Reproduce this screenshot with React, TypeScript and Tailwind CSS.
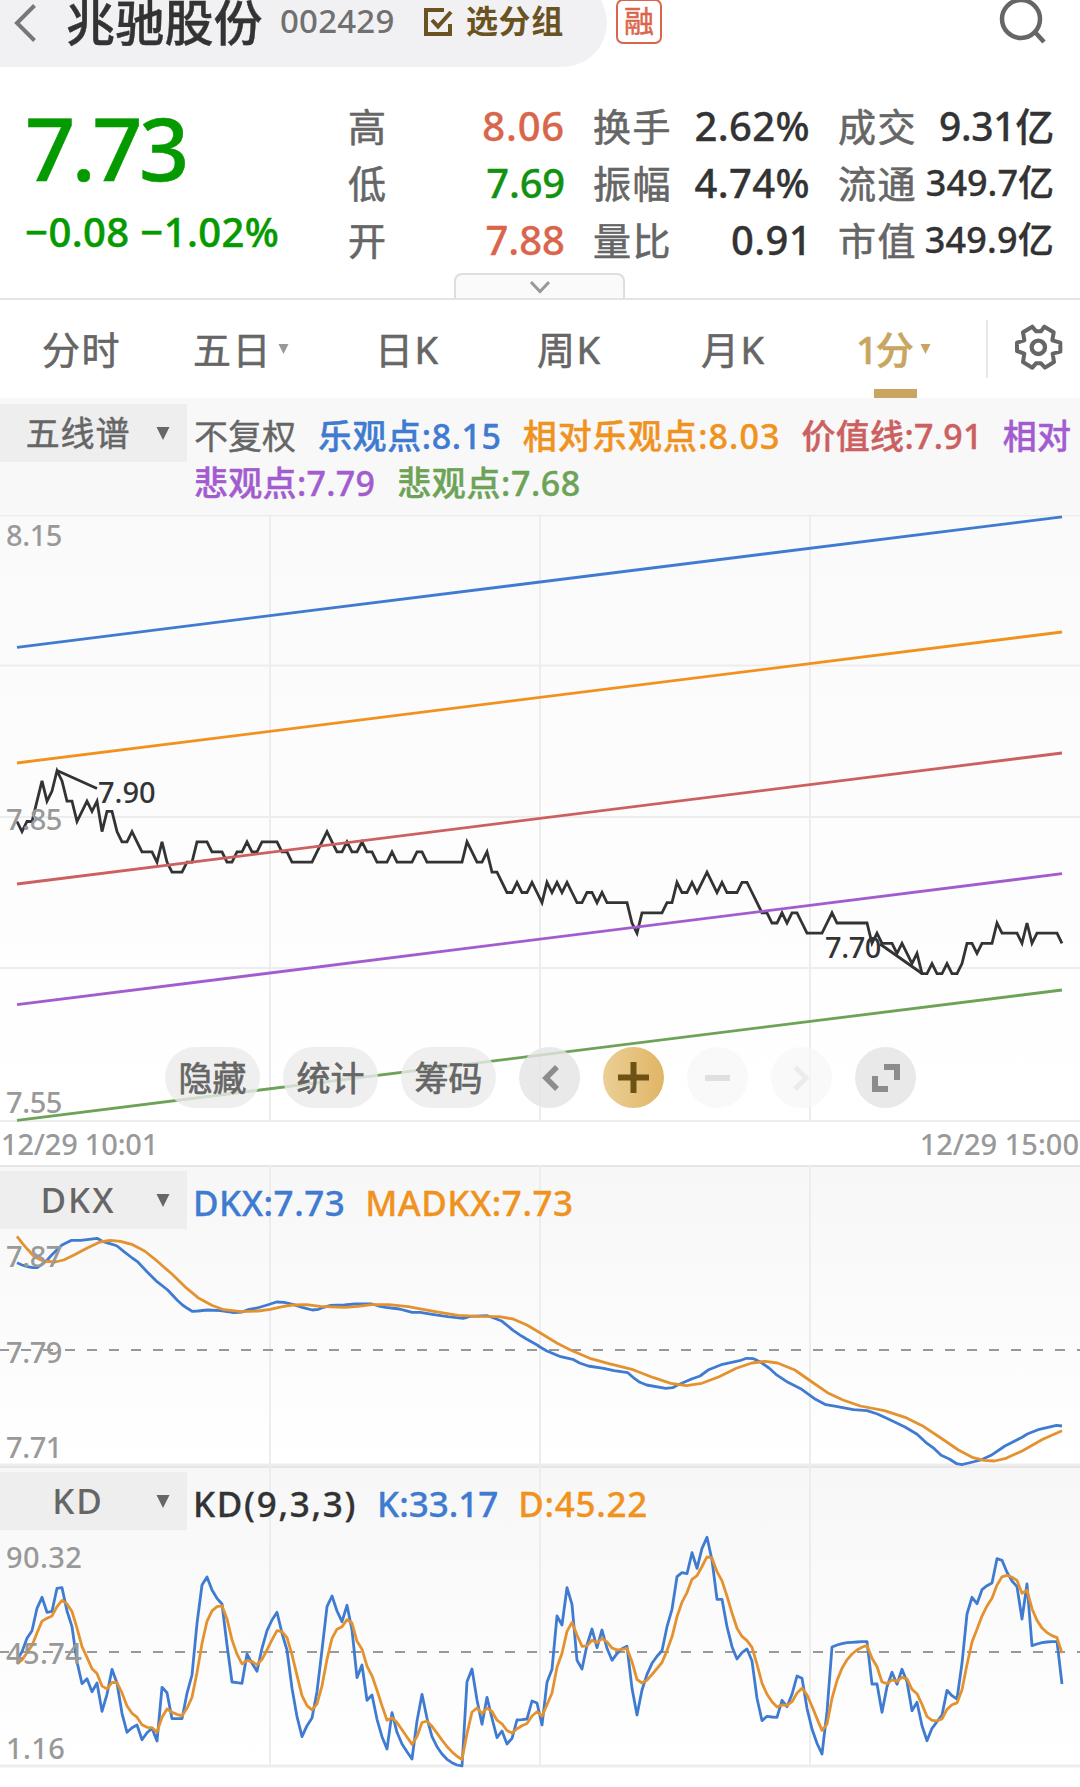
import React from "react";
import clsx from "clsx";

// 1-minute closes, in cents below the session high (7.90)
const TICKS = [
  5, 6, 5, 5, 3, 1, 3, 2, 0, 1, 3, 3, 5, 4, 3, 4, 3, 6, 4, 4, 6, 7, 7, 6, 7, 8, 8, 8, 9, 7,
  9, 10, 10, 10, 9, 9, 7, 7, 7, 8, 8, 8, 9, 9, 8, 8, 7, 8, 8, 7, 7, 7, 7, 8, 8, 9, 9, 9, 9, 9,
  8, 7, 6, 7, 8, 8, 7, 8, 8, 7, 8, 8, 9, 9, 9, 8, 9, 9, 9, 9, 8, 8, 9, 9, 9, 9, 9, 9, 9, 9,
  7, 8, 9, 9, 8, 10, 10, 11, 12, 12, 11, 12, 12, 11, 12, 13, 11, 12, 11, 12, 11, 12, 13, 13, 12, 12, 13, 12, 13, 13,
  13, 13, 13, 15, 16, 14, 14, 14, 14, 14, 13, 13, 11, 12, 12, 11, 12, 11, 10, 11, 12, 11, 12, 12, 12, 11, 11, 12, 13, 14,
  14, 15, 15, 14, 15, 14, 14, 15, 16, 16, 16, 16, 15, 14, 15, 15, 15, 15, 15, 15, 15, 17, 16, 17, 17, 17, 18, 17, 18, 19,
  18, 20, 20, 19, 20, 20, 19, 20, 20, 19, 17, 17, 18, 17, 17, 17, 15, 16, 16, 16, 16, 17, 15, 17, 16, 16, 16, 16, 16, 17,
];

// K line, distance from the top of the plot in thirds of a pixel
const K_LINE = [
  540, 515, 475, 452, 385, 352, 397, 394, 325, 323, 393, 440, 545, 611, 596, 635, 609, 694, 643, 568,
  610, 700, 757, 743, 735, 779, 758, 745, 783, 622, 638, 716, 716, 716, 640, 585, 430, 315, 291, 330,
  355, 372, 495, 606, 608, 610, 522, 550, 574, 505, 452, 420, 397, 460, 510, 625, 710, 770, 737, 714,
  635, 510, 380, 348, 393, 425, 376, 450, 593, 555, 661, 645, 718, 770, 807, 698, 757, 792, 815, 837,
  723, 643, 715, 770, 800, 822, 838, 848, 855, 858, 605, 567, 660, 733, 652, 715, 773, 753, 792, 775,
  720, 719, 717, 663, 669, 735, 607, 568, 408, 435, 323, 373, 541, 567, 495, 447, 503, 450, 505, 541,
  521, 506, 499, 625, 705, 630, 583, 550, 529, 512, 440, 388, 290, 278, 281, 218, 265, 205, 172, 240,
  358, 358, 440, 500, 537, 518, 507, 543, 655, 722, 709, 711, 712, 661, 680, 643, 588, 595, 685, 747,
  790, 822, 695, 501, 495, 491, 488, 487, 486, 485, 485, 612, 612, 697, 620, 577, 613, 568, 605, 692,
  667, 737, 782, 745, 725, 705, 631, 647, 657, 550, 402, 352, 371, 329, 317, 309, 236, 241, 277, 303,
  320, 417, 312, 497, 492, 488, 486, 485, 485, 612,
];

const DKX =
  "17,1262.7 22,1265 27.5,1266.7 32.7,1267.7 37.2,1267.7 42,1264.3 47.2,1260 51.7,1255 56.8,1250 62,1245 71.6,1240.3 80.9,1240.3 97.1,1238.3 102.3,1241.3 112.3,1244.3 117.1,1246 124,1251.7 132.2,1258 137.1,1261.3 147,1271.7 157,1281.7 167.7,1290 177.3,1300.3 182.5,1305 187.3,1308.3 192.1,1311.3 198,1311 207.3,1310 220.4,1310.7 234.2,1312.7 242.1,1312 247.9,1309.7 257.2,1308 267.2,1305 276.5,1302 284.1,1302.3 292.7,1304.3 303,1307.7 312.3,1310 318.5,1309.3 323.7,1307.3 330.6,1305.3 344.4,1305 354.7,1304 371.9,1304 378.8,1306 385.7,1307.3 399.4,1309 412.2,1312.3 420.1,1312.3 432.2,1314.3 447.7,1316.7 463.2,1318.3 470,1316.3 487.3,1315.7 495.9,1318.7 502.1,1321.3 513.1,1330.3 522,1336.3 526.9,1339.3 537.2,1345 540,1347 546.9,1351 560.7,1356.7 572.7,1359.3 579.6,1363 588.2,1366 603.7,1368.3 614,1370.7 627.8,1372.7 634.7,1378.7 639.9,1382.3 646.7,1385 665.7,1388.3 672.6,1387.7 677.7,1385 691.5,1379 700.1,1376 708.7,1369.7 722.5,1364.3 739.7,1360.7 746.6,1358.3 753.5,1358.7 760.4,1362 769,1368 775.9,1374.3 787.9,1382.3 801.7,1389.3 815.5,1399.3 825.8,1404.7 836.1,1406.3 853.4,1409.7 867.1,1410.7 877.5,1414 887.8,1418.7 905,1427 917.1,1434.3 925.7,1442.3 934.3,1448.7 941.2,1455.3 949.8,1459.3 956.7,1463.7 961.8,1464.7 968.7,1463 980.8,1460 991.1,1455.3 1004.9,1446 1022.1,1437.3 1027.3,1434 1039.3,1429.3 1056.5,1425.3 1062,1426";

const MADKX =
  "17,1236.3 22.4,1243.3 27.5,1249.3 34.4,1256.7 43,1261 55.1,1262 63.7,1260 74,1255 87.8,1247.7 99.9,1242 110.2,1240.3 120.5,1241.3 132.6,1244.7 144.6,1251 156.7,1260.7 172.2,1274.3 186,1287.7 198,1297.7 211.8,1305.3 223.8,1309.7 241,1311.7 258.3,1311 270.3,1309.3 282.4,1306.7 292.7,1305 306.5,1304.7 320.2,1306.3 344.4,1307.3 358.1,1306.3 371.9,1304.7 389.1,1304.7 408.1,1306.7 433.9,1311.3 458,1315.3 478.7,1316.3 499.3,1316.7 513.1,1319 526.9,1325 540,1332.7 557.2,1343.3 571,1350.3 589.9,1358.3 608.9,1363.7 633,1369.7 653.6,1377.7 670.9,1383.3 686.3,1385.7 701.8,1383.3 719.1,1376.7 736.3,1368.3 751.8,1363 765.6,1361.3 777.6,1363 794.8,1370 812,1382 827.5,1392.7 843,1400 860.3,1406 884.4,1410.7 905,1417.3 922.2,1425.7 939.4,1437 958.4,1450 972.2,1457.3 984.2,1460.3 994.5,1461 1004.9,1458.7 1022.1,1451 1042.8,1439.3 1062,1430.7";

const xAt = (i: number) => 17 + i * 5;

const pricePoints = TICKS.map((t, i) => `${xAt(i)},${(770.7 + t * 10.15).toFixed(1)}`).join(" ");
const kPoints = K_LINE.map((k, i) => `${xAt(i)},${(1480 + k / 3).toFixed(1)}`).join(" ");

// D is the 1/3 smoothing of K
let d = 552;
const dPoints = K_LINE.map((k, i) => {
  if (i > 0) d = (2 * d + k) / 3;
  return `${xAt(i)},${(1480 + d / 3).toFixed(1)}`;
}).join(" ");

const channel = [
  { color: "#3f7bd0", from: 647.3, to: 516.8 },
  { color: "#f0921e", from: 763, to: 632 },
  { color: "#cc6060", from: 884, to: 753 },
  { color: "#a35ccf", from: 1004.7, to: 873.7 },
  { color: "#6da357", from: 1120.3, to: 990 },
];

const GRID_X = [270, 540, 810];

function Header() {
  return (
    <header className="relative h-[67px] flex items-start">
      <div className="-mt-[22px] h-[89px] w-[607px] shrink-0 rounded-r-full bg-[#f1f1f4] flex items-center pl-[14px]">
        <svg className="w-6 h-[40px] shrink-0" viewBox="0 0 24 40" fill="none" stroke="#777" strokeWidth="4">
          <path d="M20.500 2.500 3 20l17.500 17.500" />
        </svg>
        <h1 className="ml-[28px] w-[197px] text-[49px] leading-none tracking-[0.2px] font-medium [-webkit-text-stroke:0.4px] text-[#333] whitespace-nowrap">
          兆驰股份
        </h1>
        <span className="ml-[17px] -mt-[4px] w-[115px] text-[33px] leading-none tracking-[0.2px] font-medium text-[#707070]">002429</span>
        <svg className="ml-[28px] -mt-[2px] w-[30px] h-[30px]" viewBox="0 0 30 30" fill="none" stroke="#6b5321" strokeWidth="4">
          <path d="M21 3H3v24h24V17" />
          <path d="m9 13 6 6.500L28 5" />
        </svg>
        <span className="ml-[13px] -mt-[3px] text-[32px] leading-none tracking-[0.6px] font-bold text-[#6b5321] whitespace-nowrap">选分组</span>
      </div>
      <span className="ml-[9px] -mt-px w-[46px] h-[45px] rounded-[7px] border-2 border-[#d9664c] text-[30px] leading-[40px] text-center text-[#d9664c] [-webkit-text-stroke:0.5px]">
        融
      </span>
      <svg className="ml-[337px] w-[48px] h-[46px]" viewBox="0 0 48 46" fill="none" stroke="#666" strokeWidth="4.500">
        <circle cx="22" cy="19" r="19" />
        <path d="m35 31 10 11" />
      </svg>
    </header>
  );
}

interface Quote {
  label: string;
  value: string;
  tone?: string;
  size?: string;
}

const quoteCols: { box: string; rows: Quote[] }[] = [
  {
    box: "ml-[348px] w-[217px]",
    rows: [
      { label: "高", value: "8.06", tone: "text-[#d9664c]", size: "text-[40px] tracking-[0.8px]" },
      { label: "低", value: "7.69", tone: "text-[#12920f]", size: "text-[40px] tracking-[-0.2px]" },
      { label: "开", value: "7.88", tone: "text-[#d9664c]", size: "text-[40px] tracking-[0px]" },
    ],
  },
  {
    box: "ml-[28px] w-[217px]",
    rows: [
      { label: "换手", value: "2.62%" },
      { label: "振幅", value: "4.74%" },
      { label: "量比", value: "0.91", size: "text-[40px] tracking-[0.4px] -mr-[2px]" },
    ],
  },
  {
    box: "ml-[28px] w-[216px]",
    rows: [
      { label: "成交", value: "9.31亿", size: "text-[39px] tracking-[-0.3px]" },
      { label: "流通", value: "349.7亿", size: "text-[36px]" },
      { label: "市值", value: "349.9亿", size: "text-[36px] tracking-[0.2px]" },
    ],
  },
];

function Quotes() {
  return (
    <section className="relative h-[233px] border-b-2 border-[#e4e4e4]">
      <div className="absolute left-[25px] top-[36px] text-[#059a00]">
        <div className="text-[88px] leading-[88px] font-medium tracking-[-3.5px] [-webkit-text-stroke:0.5px]">7.73</div>
        <div className="mt-[17px] text-[40px] leading-[48px] font-medium whitespace-nowrap tracking-[0.4px] [-webkit-text-stroke:0.5px]">
          −0.08 −1.02%
        </div>
      </div>
      <div className="flex pt-[30px]">
        {quoteCols.map((col) => (
          <div key={col.rows[0].label} className={col.box}>
            {col.rows.map((row) => (
              <div key={row.label} className="h-[57px] flex items-center justify-between whitespace-nowrap leading-none">
                <span className="text-[38px] tracking-[1.5px] text-[#666] [-webkit-text-stroke:0.6px]">{row.label}</span>
                <span
                  className={clsx(
                    "font-medium [-webkit-text-stroke:0.3px]",
                    row.size ?? "text-[40px] tracking-[0.4px]",
                    row.tone ?? "text-[#333]"
                  )}
                >
                  {row.value}
                </span>
              </div>
            ))}
          </div>
        ))}
      </div>
      <div className="absolute left-[454px] bottom-0 w-[171px] h-[25px] rounded-t-lg border-2 border-b-0 border-[#dedede] bg-[#fafafa] flex justify-center">
        <svg className="mt-[5px] w-5 h-[14px]" viewBox="0 0 20 14" fill="none" stroke="#999" strokeWidth="3">
          <path d="m1 2 9 9.500L19 2" />
        </svg>
      </div>
    </section>
  );
}

function Caret({ className }: { className: string }) {
  return (
    <svg className={className} viewBox="0 0 14 14" fill="currentColor">
      <path d="M0 0h14L7 14z" />
    </svg>
  );
}

const tabs = [
  { name: "分时", box: "ml-[42px] w-[151px]" },
  { name: "五日", box: "w-[182px]", caret: true },
  { name: "日K", box: "w-[162px]" },
  { name: "周K", box: "w-[164px]" },
  { name: "月K", box: "w-[155px]" },
];

function Tabs() {
  return (
    <nav className="h-[98px] flex text-[38px] leading-[100px] tracking-[1.5px] text-[#666] whitespace-nowrap [-webkit-text-stroke:0.6px]">
      {tabs.map((t) => (
        <div key={t.name} className={clsx("shrink-0 flex items-center", t.box)}>
          {t.name}
          {t.caret && <Caret className="ml-[6px] w-[11px] h-[10px] text-[#999]" />}
        </div>
      ))}
      <div className="relative w-[130px] shrink-0 flex items-center font-medium tracking-[-2px] text-[#c9a562]">
        1分
        <Caret className="ml-[8px] w-[11px] h-[10px]" />
        <span className="absolute left-[18px] bottom-0 w-[43px] h-[9px] bg-[#c9a562]" />
      </div>
      <div className="mt-5 h-[58px] border-l-2 border-[#e8e8e8]" />
      <svg className="ml-[25px] mt-[22px] w-[50px] h-[48px]" viewBox="0 0 150 144" fill="none" stroke="#666" strokeWidth="12" strokeLinejoin="round">
        <path d="M58 14 69 28h15l10-14 28 17-4 24 24 7v27l-23 6 4 25-27 17-12-13H69l-11 13-28-17 4-25-22-8V62l22-7-4-24z" />
        <circle cx="76" cy="76" r="20" strokeWidth="13" />
      </svg>
    </nav>
  );
}

function Picker({ name, text }: { name: string; text: string }) {
  return (
    <div className="relative shrink-0 w-[187px] h-[58px] bg-[#eee] flex items-center leading-none text-[#666]">
      <span className={clsx("w-[156px] text-center", text)}>{name}</span>
      <Caret className="w-[14px] h-[13px]" />
    </div>
  );
}

function AxisLabel({ className, children }: { className: string; children: React.ReactNode }) {
  return (
    <span className={clsx("absolute left-[6px] text-[29px] leading-[30px] font-medium text-[#999]", className)}>
      {children}
    </span>
  );
}

const roundBtn = "w-[61px] h-[61px] rounded-full flex items-center justify-center";

function Toolbar() {
  return (
    <div className="absolute left-[165px] top-[532px] flex gap-[23px]">
      {["隐藏", "统计", "筹码"].map((t) => (
        <button
          key={t}
          className="w-[95px] h-[61px] rounded-full bg-[#ebebeb]/80 text-[34px] leading-none text-[#666] [-webkit-text-stroke:0.7px] whitespace-nowrap"
        >
          {t}
        </button>
      ))}
      <button className={clsx(roundBtn, "bg-[#e4e4e4]/80")}>
        <svg className="w-[18px] h-[26px]" viewBox="0 0 18 26" fill="none" stroke="#8c8c8c" strokeWidth="5.500">
          <path d="M16 2 5 13l11 11" />
        </svg>
      </button>
      <button className={clsx(roundBtn, "bg-linear-to-r from-[#ebcf95] to-[#e0b565]")}>
        <svg className="w-[31px] h-[31px]" viewBox="0 0 31 31" stroke="#6e5214" strokeWidth="6">
          <path d="M15.500 0v31M0 15.500h31" />
        </svg>
      </button>
      <button className={clsx(roundBtn, "bg-[#f6f6f6]/70")}>
        <span className="w-[25px] h-[6px] bg-[#e0e0e0]" />
      </button>
      <button className={clsx(roundBtn, "bg-[#f6f6f6]/70")}>
        <svg className="w-[18px] h-[26px]" viewBox="0 0 18 26" fill="none" stroke="#ececec" strokeWidth="5">
          <path d="m2 2 11 11L2 24" />
        </svg>
      </button>
      <button className={clsx(roundBtn, "bg-[#e9e9e9]")}>
        <svg className="w-[28px] h-[28px]" viewBox="0 0 28 28" fill="none" stroke="#8c8c8c" strokeWidth="6">
          <path d="M12 3h13v13M3 12v13h13" />
        </svg>
      </button>
    </div>
  );
}

function MainChart() {
  return (
    <section className="relative h-[767px]">
      <div className="h-[117px] bg-[#f8f8f8] flex pt-[6px]">
        <Picker name="五线谱" text="text-[34px] tracking-[0.8px] [-webkit-text-stroke:0.5px]" />
        <p className="ml-[7px] pt-[9px] w-[885px] text-[34px] leading-[47px] text-[#666] whitespace-nowrap [-webkit-text-stroke:0.4px]">
          不复权
          <span className="ml-[22px] font-medium tracking-[0.6px] text-[#3f7bd0]">乐观点:8.15</span>
          <span className="ml-[21px] font-medium tracking-[1.1px] text-[#f0921e]">相对乐观点:8.03</span>
          <span className="ml-[21px] font-medium tracking-[0.3px] text-[#cc6060]">价值线:7.91</span>
          <span className="ml-[20px] font-medium tracking-[0.3px] text-[#a35ccf]">
            相对
            <br />
            悲观点:7.79
          </span>
          <span className="ml-[22px] font-medium tracking-[0.6px] text-[#6da357]">悲观点:7.68</span>
        </p>
      </div>
      <div className="relative h-[607px] bg-linear-to-b from-[#fafafa] to-white">
        <svg className="block w-[1080px] h-[607px]" viewBox="0 515 1080 607" fill="none">
          <g stroke="#ededed" strokeWidth="2">
            {[515.5, 665.5, 817, 968, 1121].map((y) => (
              <path key={y} d={`M0 ${y}h1080`} />
            ))}
            {GRID_X.map((x) => (
              <path key={x} d={`M${x} 515v607`} />
            ))}
          </g>
          <polyline points={pricePoints} stroke="#333" strokeWidth="2.800" />
          {channel.map((l) => (
            <path key={l.color} d={`M17 ${l.from}L1062 ${l.to}`} stroke={l.color} strokeWidth="2.800" />
          ))}
          <path d="M57 770.500 97 788.500M880 944l42 29.500" stroke="#333" strokeWidth="2.800" />
        </svg>
        <AxisLabel className="top-[5px] tracking-[-0.4px]">8.15</AxisLabel>
        <AxisLabel className="top-[289px] tracking-[-0.4px]">7.85</AxisLabel>
        <AxisLabel className="top-[572px] tracking-[-0.4px]">7.55</AxisLabel>
        <span className="absolute left-[98px] top-[262px] text-[29px] leading-[30px] font-medium text-[#333]">7.90</span>
        <span className="absolute left-[825px] top-[417px] text-[29px] leading-[30px] font-medium tracking-[-0.4px] text-[#333]">7.70</span>
        <Toolbar />
      </div>
      <div className="h-[43px] flex justify-between items-center px-[1px] text-[29px] leading-none font-medium text-[#999]">
        <span className="tracking-[-0.2px]">12/29 10:01</span>
        <span>12/29 15:00</span>
      </div>
    </section>
  );
}

interface SubChartProps {
  name: string;
  top: number;
  mid: number;
  labels: string[];
  labelTracking: string;
  legend: React.ReactNode;
  children: React.ReactNode;
}

function SubChart({ name, top, mid, labels, labelTracking, legend, children }: SubChartProps) {
  return (
    <section className="relative h-[301px] bg-linear-to-b from-[#f7f7f7] to-white border-t-2 border-[#e6e6e6]">
      <svg className="absolute left-0 -top-[2px] w-[1080px] h-[302px]" viewBox={`0 ${top} 1080 302`} fill="none">
        <path d={`M0 ${top + 300}h1080`} stroke="#ededed" strokeWidth="3" />
        {GRID_X.map((x) => (
          <path key={x} d={`M${x} ${top}v301`} stroke="#ededed" strokeWidth="2" />
        ))}
        <path d={`M-1 ${mid}h1082`} stroke="#999" strokeWidth="2" strokeDasharray="10 12" />
        {children}
      </svg>
      <div className="relative pt-[4px] flex">
        <Picker name={name} text="text-[35px] tracking-[2px] font-medium -mt-[2px]" />
        <div className="ml-[6px] pt-[8px] flex text-[35px] leading-[48px] font-medium whitespace-nowrap [-webkit-text-stroke:0.3px]">
          {legend}
        </div>
      </div>
      <AxisLabel className={clsx("top-[74px]", labelTracking)}>{labels[0]}</AxisLabel>
      <AxisLabel className={clsx("top-[170px]", labelTracking)}>{labels[1]}</AxisLabel>
      <AxisLabel className={clsx("top-[265px]", labelTracking)}>{labels[2]}</AxisLabel>
    </section>
  );
}

export default function App() {
  return (
    <main className="w-[1080px] h-[1787px] overflow-hidden bg-white font-['Noto_Sans','Noto_Sans_CJK_SC',sans-serif]">
      <Header />
      <Quotes />
      <Tabs />
      <MainChart />
      <SubChart
        name="DKX"
        top={1165}
        mid={1350}
        labels={["7.87", "7.79", "7.71"]}
        labelTracking="tracking-[-0.4px]"
        legend={
          <>
            <span className="tracking-[0.5px] text-[#3f7bd0]">DKX:7.73</span>
            <span className="ml-[20px] tracking-[0.5px] text-[#f0921e]">MADKX:7.73</span>
          </>
        }
      >
        <polyline points={DKX} stroke="#3f7bd0" strokeWidth="2.800" strokeLinejoin="round" />
        <polyline points={MADKX} stroke="#e3922f" strokeWidth="2.800" strokeLinejoin="round" />
      </SubChart>
      <SubChart
        name="KD"
        top={1466}
        mid={1652}
        labels={["90.32", "45.74", "1.16"]}
        labelTracking="tracking-[0.4px]"
        legend={
          <>
            <span className="tracking-[1.7px] text-[#333]">KD(9,3,3)</span>
            <span className="ml-[20px] text-[#3f7bd0]">K:33.17</span>
            <span className="ml-[20px] tracking-[0.7px] text-[#f0921e]">D:45.22</span>
          </>
        }
      >
        <polyline points={kPoints} stroke="#3f7bd0" strokeWidth="2.800" strokeLinejoin="round" />
        <polyline points={dPoints} stroke="#e3922f" strokeWidth="2.800" strokeLinejoin="round" />
      </SubChart>
    </main>
  );
}
